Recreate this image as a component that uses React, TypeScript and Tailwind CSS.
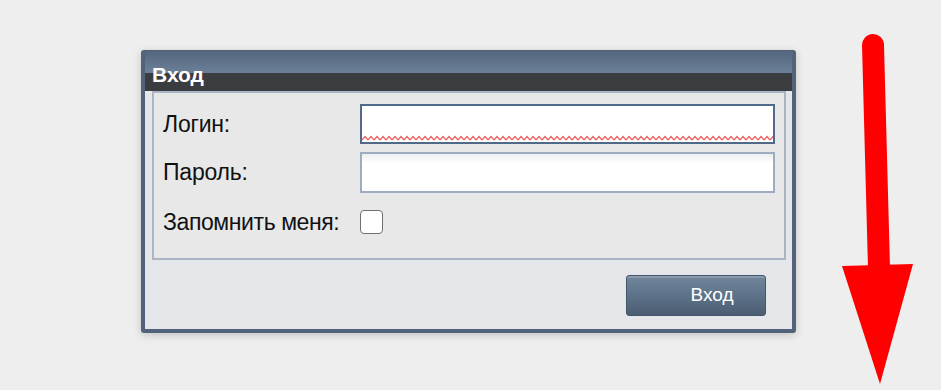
import React from "react";

export default function App() {
  return (
    <div className="relative w-[941px] h-[390px] bg-[#eeeeee] overflow-hidden" style={{ fontFamily: '"Liberation Sans", Arial, sans-serif' }}>
      <div className="pt-[50px] pl-[141px]">
        <div className="w-[655px] h-[283px] flex flex-col border-x-4 border-b-4 border-t border-[#51627a] rounded-[3px] shadow-[0_2px_8px_rgba(0,0,0,0.18)] bg-[#e4e6e9]">
          {/* title */}
          <div className="relative h-[40px] flex flex-col">
            <div className="h-[22px] bg-gradient-to-b from-[#53667d] to-[#6c8099]" />
            <div className="h-[18px] bg-[#3b3c3f]" />
            <div className="absolute left-[7px] top-[11px] text-white font-bold text-[21px] leading-[25px]">Вход</div>
          </div>
          {/* panel */}
          <div className="ml-[7px] mr-[6px] h-[169px] border-2 border-[#a9b5c4] bg-[#e8e8e8] pl-[9px] pr-[9px] pt-[11px]">
            <div className="flex items-center h-[40px]">
              <div className="w-[197px] text-[23px] tracking-[-0.2px] text-[#111]">Логин:</div>
              <div className="relative flex-1 h-[40px] border-2 border-[#4f6b89] bg-white">
                <svg className="absolute left-0 right-0 bottom-[1px]" width="100%" height="6">
                  <defs>
                    <pattern id="wave" width="6" height="6" patternUnits="userSpaceOnUse">
                      <path d="M0 5 L3 1.5 L6 5" fill="none" stroke="#f25c5c" strokeWidth="1.2" />
                    </pattern>
                  </defs>
                  <rect width="100%" height="6" fill="url(#wave)" />
                </svg>
              </div>
            </div>
            <div className="flex items-center h-[41px] mt-[8px]">
              <div className="w-[197px] text-[23px] tracking-[-0.2px] text-[#111]">Пароль:</div>
              <div className="flex-1 h-[41px] border-2 border-[#9badbf] bg-gradient-to-b from-[#eceef0] via-white via-[25%] to-white" />
            </div>
            <div className="flex items-center h-[24px] mt-[17px]">
              <div className="w-[197px] text-[23px] tracking-[-0.4px] text-[#111]">Запомнить меня:</div>
              <div className="w-[23px] h-[24px] rounded-[4px] border border-[#707070] bg-white" />
            </div>
          </div>
          {/* footer */}
          <div className="flex-1 flex justify-end items-start pt-[15px] pr-[26px]">
            <div className="w-[140px] h-[41px] rounded-[3px] border border-[#44566b] bg-gradient-to-b from-[#71859b] via-[#5e7289] to-[#4a5d72] shadow-[inset_0_2px_0_rgba(255,255,255,0.18)] flex items-center justify-center pl-[32px] text-white text-[19px]">
              Вход
            </div>
          </div>
        </div>
      </div>
      <svg className="absolute left-0 top-0" width="941" height="390">
        <line x1="873" y1="45" x2="879" y2="268" stroke="#ff0000" strokeWidth="22" strokeLinecap="round" />
        <polygon points="842,266 913,264 880,384" fill="#ff0000" />
      </svg>
    </div>
  );
}
